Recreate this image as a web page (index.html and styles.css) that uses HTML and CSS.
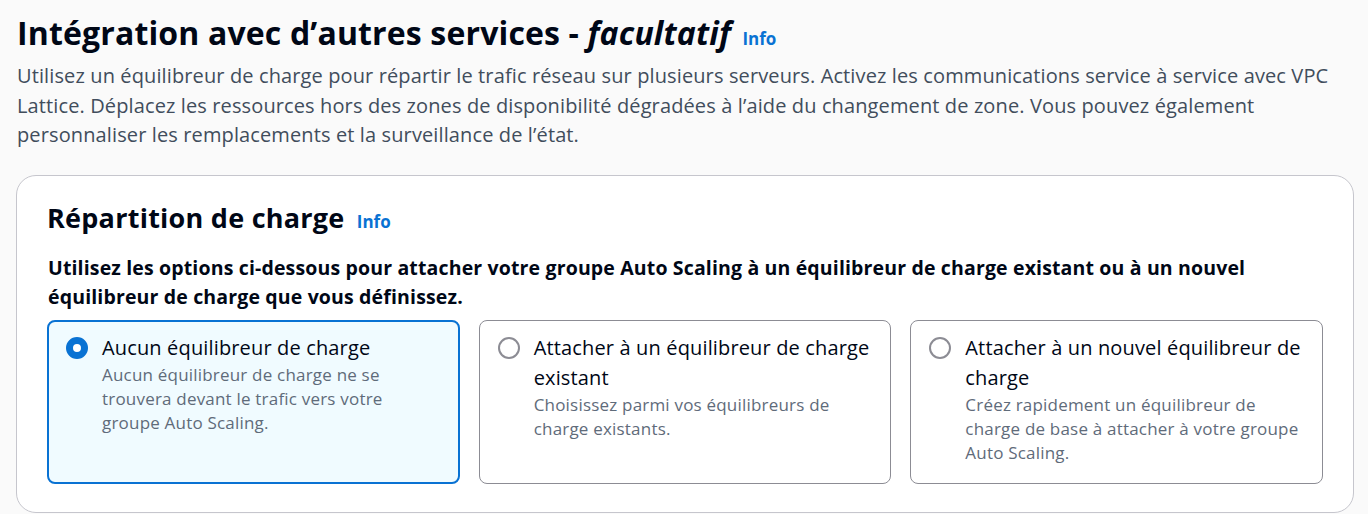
FILE: index.html
```html
<!DOCTYPE html>
<html lang="fr">
<head>
<meta charset="utf-8">
<title>Intégration</title>
<link rel="stylesheet" href="styles.css">
</head>
<body>
<main class="page">
  <header class="section-header">
    <h1 class="title">Intégration avec d’autres services - <em>facultatif</em> <a class="info" href="#">Info</a></h1>
    <p class="lead">Utilisez un équilibreur de charge pour répartir le trafic réseau sur plusieurs serveurs. Activez les communications service à service avec VPC Lattice. Déplacez les ressources hors des zones de disponibilité dégradées à l’aide du changement de zone. Vous pouvez également personnaliser les remplacements et la surveillance de l’état.</p>
  </header>
  <section class="card">
    <h2 class="card-title">Répartition de charge <a class="info info-sm" href="#">Info</a></h2>
    <p class="card-desc">Utilisez les options ci-dessous pour attacher votre groupe Auto Scaling à un équilibreur de charge existant ou à un nouvel équilibreur de charge que vous définissez.</p>
    <div class="tiles">
      <label class="tile selected">
        <span class="radio on"></span>
        <span class="tile-body">
          <span class="tile-label">Aucun équilibreur de charge</span>
          <span class="tile-desc">Aucun équilibreur de charge ne se trouvera devant le trafic vers votre groupe Auto Scaling.</span>
        </span>
      </label>
      <label class="tile">
        <span class="radio"></span>
        <span class="tile-body">
          <span class="tile-label">Attacher à un équilibreur de charge existant</span>
          <span class="tile-desc">Choisissez parmi vos équilibreurs de charge existants.</span>
        </span>
      </label>
      <label class="tile">
        <span class="radio"></span>
        <span class="tile-body">
          <span class="tile-label">Attacher à un nouvel équilibreur de charge</span>
          <span class="tile-desc">Créez rapidement un équilibreur de charge de base à attacher à votre groupe Auto Scaling.</span>
        </span>
      </label>
    </div>
  </section>
</main>
</body>
</html>
```

FILE: styles.css
```css
* { box-sizing: border-box; }
html, body { margin: 0; padding: 0; }
body {
  background: #fafafa;
  color: #000716;
  font-family: "Open Sans", "Noto Sans", sans-serif;
  overflow: hidden;
}
.page {
  padding: 13px 14px 0 16px;
}
.section-header {
  padding-left: 1px;
}
.title {
  margin: 0;
  font-size: 32px;
  font-weight: 700;
  line-height: 40px;
  letter-spacing: 0.15px;
  color: #000716;
}
.title em { font-style: italic; }
.info {
  font-size: 17px;
  font-weight: 700;
  color: #0972d3;
  text-decoration: none;
  letter-spacing: 0;
  margin-left: 3px;
}
.lead {
  margin: 2px 0 0 0;
  font-size: 20px;
  line-height: 29.5px;
  letter-spacing: 0.12px;
  color: #414d5c;
}
.card {
  margin-top: 25px;
  background: #ffffff;
  border: 1px solid #c6c6cd;
  border-radius: 20px;
  padding: 24px 30px 28px 30px;
}
.card-title {
  margin: 0;
  font-size: 27px;
  font-weight: 700;
  line-height: 36px;
  letter-spacing: 0.25px;
  color: #000716;
}
.info-sm { font-size: 17px; margin-left: 5px; letter-spacing: 0; }
.card-desc {
  margin: 13px 0 0 1px;
  font-size: 19.5px;
  font-weight: 700;
  line-height: 29px;
  letter-spacing: 0.15px;
  color: #000716;
}
.tiles {
  margin-top: 9px;
  display: grid;
  grid-template-columns: repeat(3, 1fr);
  gap: 19px;
}
.tile {
  display: flex;
  gap: 14px;
  min-height: 164px;
  padding: 14px 18px 16px 18px;
  border: 1px solid #8c8c94;
  border-radius: 8px;
  background: #ffffff;
}
.tile.selected {
  border: 2px solid #0972d3;
  background: #f0fbff;
  padding: 13px 17px 15px 17px;
}
.radio {
  flex: none;
  width: 22px;
  height: 22px;
  margin-top: 2px;
  border-radius: 50%;
  border: 2px solid #8c8c94;
  background: #fff;
}
.radio.on {
  border: 7px solid #0972d3;
  background: #fff;
}
.tile-body { display: flex; flex-direction: column; }
.tile-label {
  font-size: 20px;
  line-height: 30px;
  letter-spacing: 0.15px;
  color: #000716;
  margin-top: -2px;
}
.tile-desc {
  font-size: 17px;
  line-height: 24px;
  letter-spacing: 0.2px;
  color: #5f6b7a;
  margin-top: 0;
}
```
